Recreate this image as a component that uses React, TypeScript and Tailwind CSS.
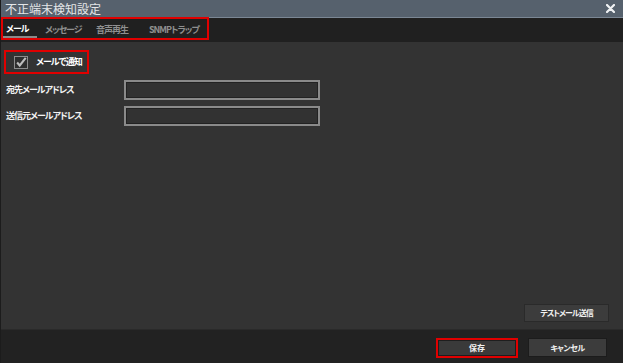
const jp = "font-['Noto_Sans_CJK_JP','Noto_Sans',sans-serif] [font-feature-settings:'palt'] whitespace-nowrap";

const label = "text-[9px] tracking-[-1px] font-bold";

const App = () => {
  return (
    <div className={`w-[623px] h-[363px] flex flex-col bg-[#333333] border-l border-[#1c1c1c] ${jp}`}>
      {/* title bar */}
      <div className="h-[18px] shrink-0 flex items-center justify-between bg-[#56616d] border-b border-[#7b8794] pl-[4px] pr-[8px]">
        <span className="text-[12px] leading-[17px] text-[#e4e6e8]">不正端末検知設定</span>
        <svg width="9" height="9" viewBox="0 0 9 9">
          <path d="M1 1 L8 8 M8 1 L1 8" stroke="#f0f2f4" strokeWidth="2.2" strokeLinecap="round" />
        </svg>
      </div>

      {/* tabs */}
      <div className="h-[24px] bg-[#202020] flex items-stretch">
        <div className={`flex items-stretch border-2 border-[#e00000] w-[208px] -mt-[1px] h-[23px] pt-[2px] ${label}`}>
          <div className="w-[42px] shrink-0 flex items-stretch">
            <span className="w-[34px] flex items-center pl-[3px] text-white border-b-2 border-[#8a8a8a]">メール</span>
          </div>
          <span className="w-[51px] shrink-0 flex items-center text-[#8f8f8f]">メッセージ</span>
          <span className="w-[53px] shrink-0 flex items-center text-[#8f8f8f]">音声再生</span>
          <span className="flex items-center text-[#8f8f8f]">SNMPトラップ</span>
        </div>
      </div>

      {/* content */}
      <div className="flex-1 flex flex-col px-[3px] pt-[8px]">
        <div className="w-[85px] h-[24px] border-2 border-[#e00000] flex items-center pl-[8px] gap-[8px]">
          <div className="w-[14px] h-[13px] shrink-0 border border-[#8c8c8c] bg-[#2e2e2e] flex items-center justify-center">
            <svg width="14" height="13" viewBox="0 0 14 13">
              <path d="M2.5 6.5 L5.5 10 L12.5 1" stroke="#bdbdbd" strokeWidth="2.4" fill="none" />
            </svg>
          </div>
          <span className={`${label} text-white`}>メールで通知</span>
        </div>

        <div className="flex items-center mt-[6px] h-[20px]">
          <span className={`w-[120px] shrink-0 pl-[2px] ${label} text-[#f2f2f2]`}>宛先メールアドレス</span>
          <div className="w-[196px] h-[20px] border-2 border-[#8a8a8a] bg-[#323232] shadow-[inset_0_0_0_1px_#222]" />
        </div>
        <div className="flex items-center mt-[6px] h-[20px]">
          <span className={`w-[120px] shrink-0 pl-[2px] ${label} text-[#f2f2f2]`}>送信元メールアドレス</span>
          <div className="w-[196px] h-[20px] border-2 border-[#8a8a8a] bg-[#323232] shadow-[inset_0_0_0_1px_#222]" />
        </div>

        <div className="flex-1" />
        <div className="flex justify-end pr-[11px] pb-[7px]">
          <button className="w-[85px] h-[18px] bg-[#3c3c3c] border border-[#2a2a2a] text-[8px] tracking-[-1px] font-bold text-[#f2f2f2]">
            テストメール送信
          </button>
        </div>
      </div>

      {/* footer */}
      <div className="h-[34px] bg-[#222222] border-t border-[#2a2a2a] flex items-center justify-end gap-[10px] pr-[16px] pt-[2px]">
        <button className="w-[82px] h-[20px] bg-[#3a3a3a] border-2 border-[#e00000] text-[8px] font-bold text-[#f2f2f2] shadow-[inset_0_0_0_1px_#1e1e1e]">
          保存
        </button>
        <button className="w-[79px] h-[19px] bg-[#3c3c3c] border border-[#1c1c1c] text-[8px] tracking-[-0.5px] font-bold text-[#f2f2f2]">
          キャンセル
        </button>
      </div>
    </div>
  );
};

export default App;
